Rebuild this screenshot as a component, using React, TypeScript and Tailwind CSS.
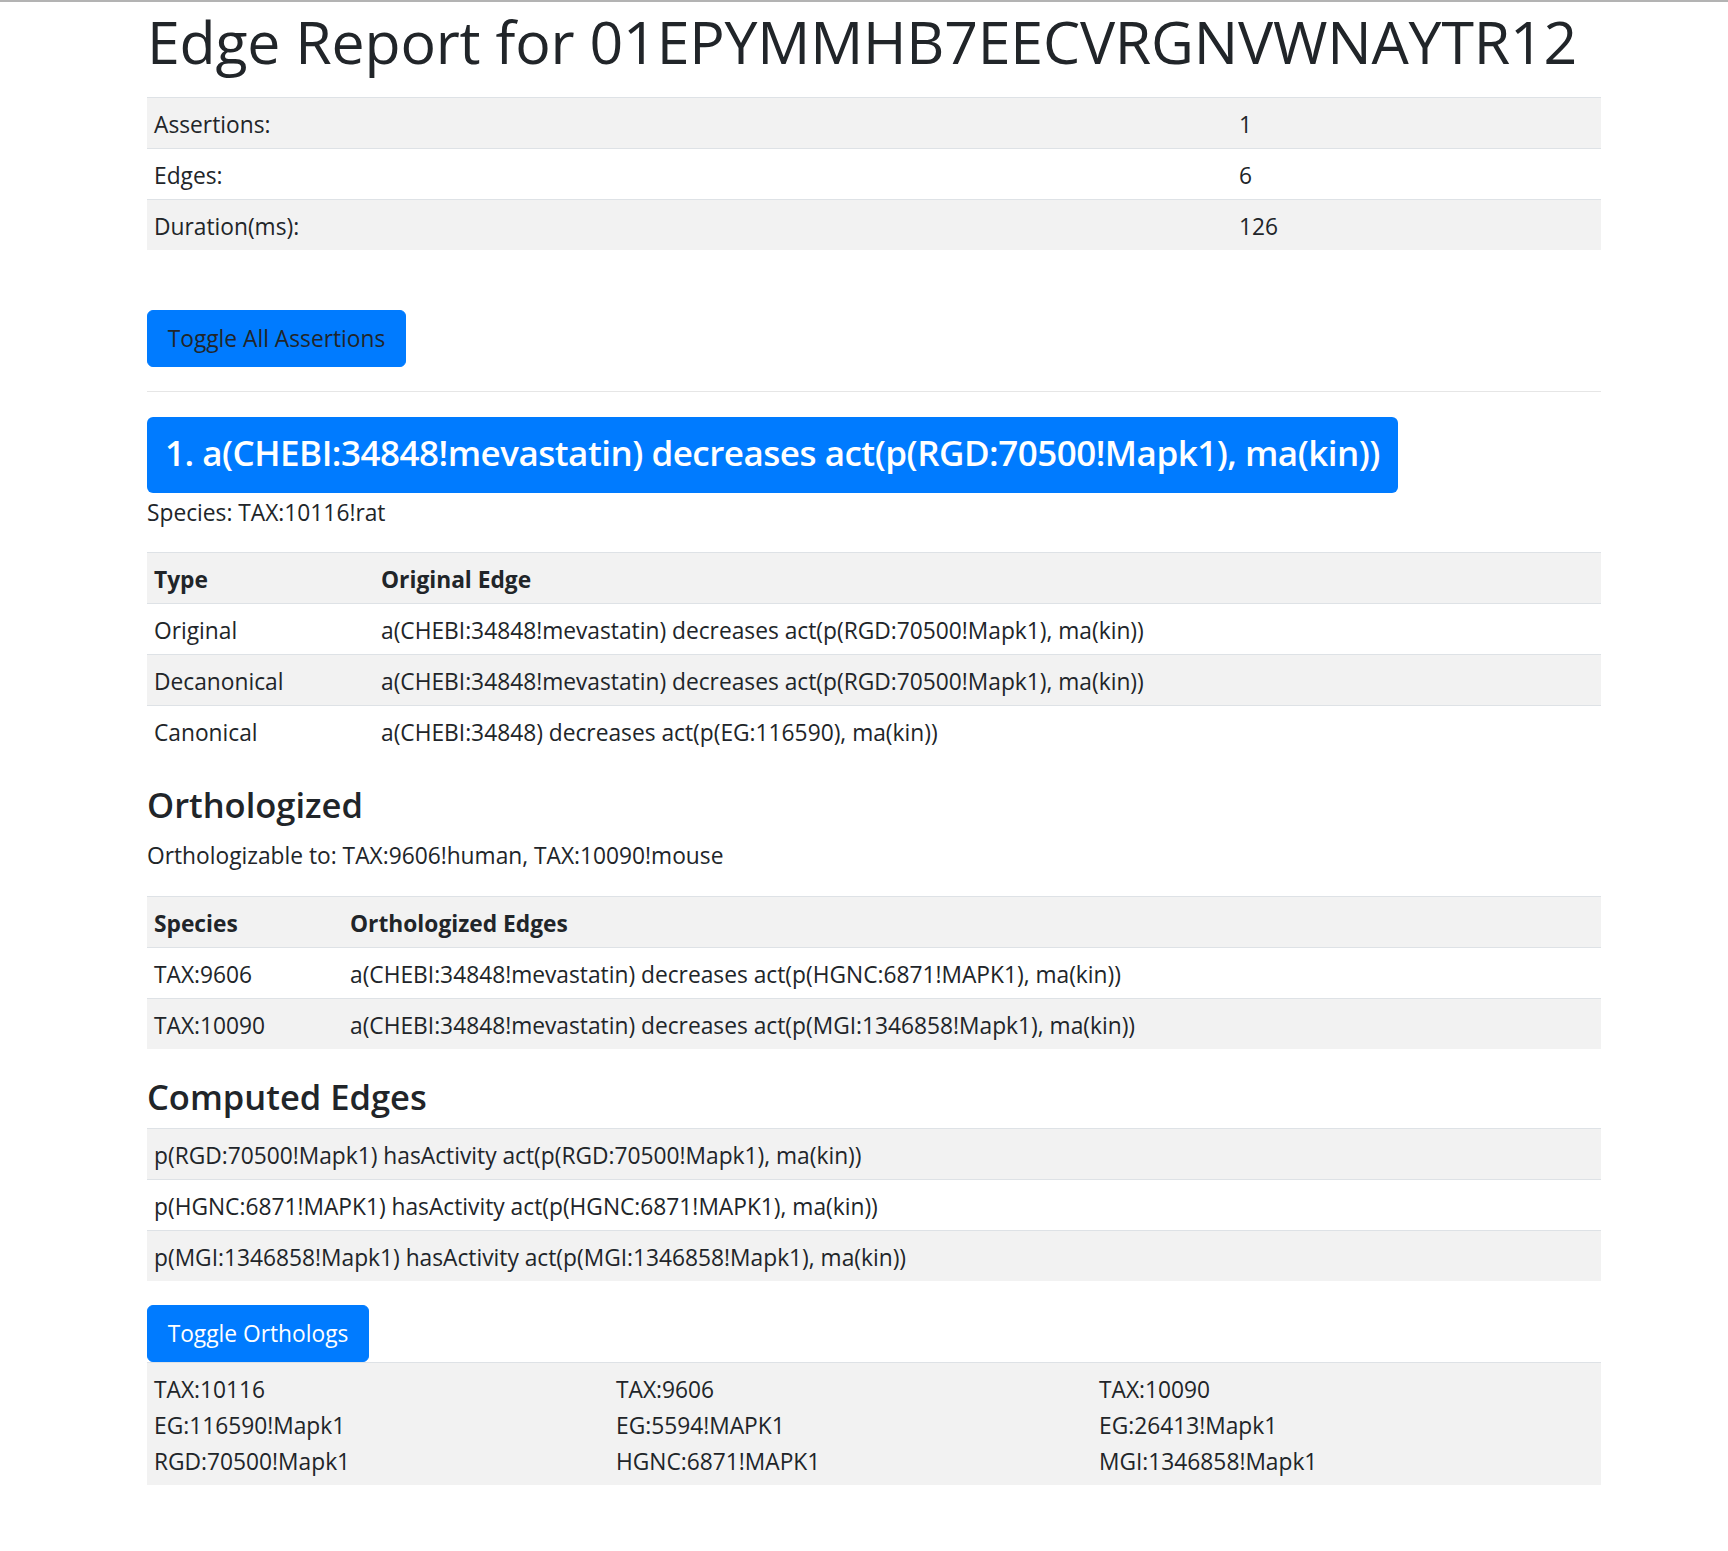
import type { ReactNode } from "react";

interface TableProps {
  cols: string[];
  rows: ReactNode[][];
  head?: string[];
}

// Bootstrap-ish "table table-sm table-striped": the header row takes part in the striping too
function ReportTable({ cols, rows, head }: TableProps): JSX.Element {
  const all: { cells: ReactNode[]; bold: boolean }[] = [
    ...(head ? [{ cells: head as ReactNode[], bold: true }] : []),
    ...rows.map((cells) => ({ cells, bold: false })),
  ];
  return (
    <table className="w-full table-fixed">
      <colgroup>
        {cols.map((w, i) => (
          <col key={i} className={w} />
        ))}
      </colgroup>
      <tbody>
        {all.map((row, i) => (
          <tr key={i} className={i % 2 === 0 ? "bg-[#f2f2f2]" : "bg-white"}>
            {row.cells.map((cell, j) => (
              <td
                key={j}
                className={`border-t border-[#dee2e6] px-[7px] pb-[5px] pt-[9px] align-top leading-[36px] ${
                  row.bold ? "font-bold" : ""
                }`}
              >
                {cell}
              </td>
            ))}
          </tr>
        ))}
      </tbody>
    </table>
  );
}

const SUMMARY = [
  ["Assertions:", "1"],
  ["Edges:", "6"],
  ["Duration(ms):", "126"],
];

const EDGE_TYPES = [
  ["Original", "a(CHEBI:34848!mevastatin) decreases act(p(RGD:70500!Mapk1), ma(kin))"],
  ["Decanonical", "a(CHEBI:34848!mevastatin) decreases act(p(RGD:70500!Mapk1), ma(kin))"],
  ["Canonical", "a(CHEBI:34848) decreases act(p(EG:116590), ma(kin))"],
];

const ORTHOLOGIZED = [
  ["TAX:9606", "a(CHEBI:34848!mevastatin) decreases act(p(HGNC:6871!MAPK1), ma(kin))"],
  ["TAX:10090", "a(CHEBI:34848!mevastatin) decreases act(p(MGI:1346858!Mapk1), ma(kin))"],
];

const COMPUTED = [
  ["p(RGD:70500!Mapk1) hasActivity act(p(RGD:70500!Mapk1), ma(kin))"],
  ["p(HGNC:6871!MAPK1) hasActivity act(p(HGNC:6871!MAPK1), ma(kin))"],
  ["p(MGI:1346858!Mapk1) hasActivity act(p(MGI:1346858!Mapk1), ma(kin))"],
];

const ORTHOLOGS = [
  ["TAX:10116", "EG:116590!Mapk1", "RGD:70500!Mapk1"],
  ["TAX:9606", "EG:5594!MAPK1", "HGNC:6871!MAPK1"],
  ["TAX:10090", "EG:26413!Mapk1", "MGI:1346858!Mapk1"],
];

export default function App(): JSX.Element {
  return (
    <div className="min-h-[1551px] border-t-2 border-[#b3b3b3] bg-white font-['Open_Sans','Noto_Sans',sans-serif] text-[22.75px] text-[#212529]">
      <div className="ml-[147px] w-[1454px]">
        <h1 className="mb-[20px] mt-[3px] whitespace-nowrap text-[59px] font-medium leading-[72px] tracking-[-0.2px]">
          Edge Report for 01EPYMMHB7EECVRGNVWNAYTR12
        </h1>

        <ReportTable cols={["w-[1085px]", "w-auto"]} rows={SUMMARY} />

        <button
          type="button"
          className="mt-[60px] h-[57px] w-[259px] rounded-[6px] border border-[#007bff] bg-[#007bff] leading-[36px] text-[#212529]"
        >
          Toggle All Assertions
        </button>

        <hr className="mt-[24px] border-t border-[#e6e6e6]" />

        <div className="mt-[25px]">
          <div className="flex h-[76px] w-[1251px] items-center whitespace-nowrap rounded-[6px] bg-[#007bff] px-[18px] pb-[4px] text-[35px] font-semibold tracking-[-0.5px] text-white">
            1. a(CHEBI:34848!mevastatin) decreases act(p(RGD:70500!Mapk1), ma(kin))
          </div>
          <p className="pt-[2px] leading-[36px]">Species: TAX:10116!rat</p>

          <div className="mt-[21px]">
            <ReportTable cols={["w-[227px]", "w-auto"]} head={["Type", "Original Edge"]} rows={EDGE_TYPES} />
          </div>

          <h4 className="mb-[12px] mt-[27px] text-[34.5px] font-semibold leading-[43px]">Orthologized</h4>
          <p className="mb-[22px] leading-[36px]">Orthologizable to: TAX:9606!human, TAX:10090!mouse</p>

          <ReportTable cols={["w-[196px]", "w-auto"]} head={["Species", "Orthologized Edges"]} rows={ORTHOLOGIZED} />

          <h4 className="mb-[10px] mt-[26px] text-[34.5px] font-semibold leading-[43px]">Computed Edges</h4>

          <ReportTable cols={["w-auto"]} rows={COMPUTED} />

          <button
            type="button"
            className="mt-[24px] block h-[57px] w-[222px] rounded-[6px] border border-[#007bff] bg-[#007bff] leading-[36px] text-white"
          >
            Toggle Orthologs
          </button>

          <ReportTable
            cols={["w-[462px]", "w-[483px]", "w-auto"]}
            rows={[
              ORTHOLOGS.map((group, i) => (
                <div key={i}>
                  {group.map((id) => (
                    <div key={id}>{id}</div>
                  ))}
                </div>
              )),
            ]}
          />
        </div>
      </div>
    </div>
  );
}
